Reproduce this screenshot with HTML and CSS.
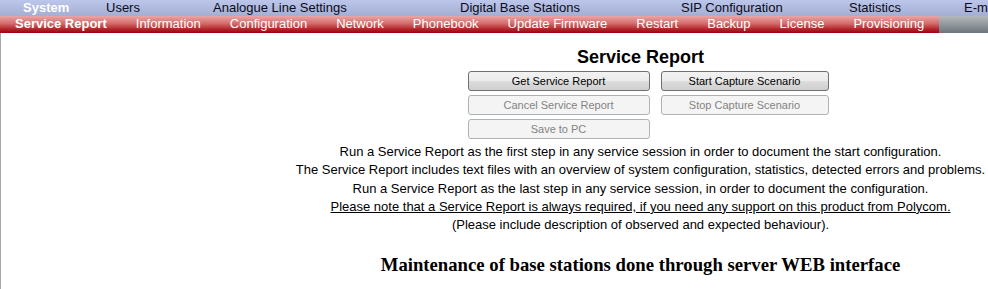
FILE: index.html
```html
<!DOCTYPE html>
<html lang="en">
<head>
    <meta charset="UTF-8">
    <title>Service Report</title>
    <link rel="stylesheet" href="styles.css">
</head>
<body>

<div class="menu-top">
    <span class="active">System</span>
    <span>Users</span>
    <span>Analogue Line Settings</span>
    <span>Digital Base Stations</span>
    <span>SIP Configuration</span>
    <span>Statistics</span>
    <span>E-mail</span>
</div>

<div class="menu-sub">
    <div class="menu-sub-items">
        <span class="active">Service Report</span>
        <span>Information</span>
        <span>Configuration</span>
        <span>Network</span>
        <span>Phonebook</span>
        <span>Update Firmware</span>
        <span>Restart</span>
        <span>Backup</span>
        <span>License</span>
        <span>Provisioning</span>
    </div>
    <div class="menu-sub-fill"></div>
</div>

<div class="page">
    <div class="content">
        <h2>Service Report</h2>

        <div class="buttons">
            <button type="button">Get Service Report</button>
            <button type="button">Start Capture Scenario</button>
            <button type="button" disabled>Cancel Service Report</button>
            <button type="button" disabled>Stop Capture Scenario</button>
            <button type="button" disabled>Save to PC</button>
        </div>

        <div class="info">
            <p>Run a Service Report as the first step in any service session in order to document the start configuration.</p>
            <p>The Service Report includes text files with an overview of system configuration, statistics, detected errors and problems.</p>
            <p>Run a Service Report as the last step in any service session, in order to document the configuration.</p>
            <p class="note">Please note that a Service Report is always required, if you need any support on this product from Polycom.</p>
            <p>(Please include description of observed and expected behaviour).</p>
        </div>

        <h3>Maintenance of base stations done through server WEB interface</h3>
    </div>
</div>

</body>
</html>
```

FILE: styles.css
```css
html, body { margin: 0; padding: 0; background: #fff; }
body {
    font-family: "Liberation Sans", Arial, sans-serif;
    font-size: 13px;
    color: #000;
    height: 289px;
    overflow: hidden;
}

/* top menu */
.menu-top {
    display: flex;
    height: 16px;
    line-height: 16px;
    padding-left: 23px;
    white-space: nowrap;
    overflow: hidden;
    background: linear-gradient(#bcc6ea, #a3aed2);
}
.menu-top span { flex: none; color: #0a0a20; }
.menu-top span:nth-child(1) { width: 83px; }
.menu-top span:nth-child(2) { width: 107px; }
.menu-top span:nth-child(3) { width: 247px; }
.menu-top span:nth-child(4) { width: 221px; }
.menu-top span:nth-child(5) { width: 168px; }
.menu-top span:nth-child(6) { width: 115px; }
.menu-top .active { color: #fff; font-weight: bold; }

/* sub menu */
.menu-sub {
    display: flex;
    height: 17px;
    line-height: 16px;
    white-space: nowrap;
}
.menu-sub-items {
    display: flex;
    background: linear-gradient(#eaa6a6, #d46a6a 45%, #b52a2e 75%, #a00010);
}
.menu-sub-items span { padding: 0 14.5px; color: #fff; }
.menu-sub-items .active { font-weight: bold; padding-left: 15px; }
.menu-sub-fill {
    flex: 1;
    background: linear-gradient(#b4b8bc, #8e949a 55%, #6c737a);
}

/* page */
.page {
    border-left: 1px solid #a8a8a8;
    height: 256px;
}
.content {
    margin-left: 292px;
    text-align: center;
}
h2 {
    margin: 0;
    padding-top: 13px;
    font-size: 18px;
    line-height: 22px;
}
.buttons {
    display: grid;
    grid-template-columns: 182px 168px;
    column-gap: 11px;
    row-gap: 4px;
    justify-content: center;
    padding-left: 15px;
    margin-top: 3px;
}
button {
    height: 20px;
    padding: 0;
    font-family: "Liberation Sans", Arial, sans-serif;
    font-size: 11px;
    color: #000;
    border: 1px solid #707070;
    border-radius: 3px;
    background: linear-gradient(#f2f2f2 0%, #ebebeb 50%, #dddddd 51%, #cfcfcf 100%);
}
button:disabled {
    color: #838383;
    border-color: #adb2b5;
    background: #f4f4f4;
}
.info { margin-top: 4px; }
.info p {
    margin: 0;
    line-height: 18.3px;
}
.info .note { text-decoration: underline; }
h3 {
    margin: 20px 0 0;
    font-family: "Liberation Serif", "Times New Roman", serif;
    font-size: 18.72px;
    line-height: 22px;
}
```
